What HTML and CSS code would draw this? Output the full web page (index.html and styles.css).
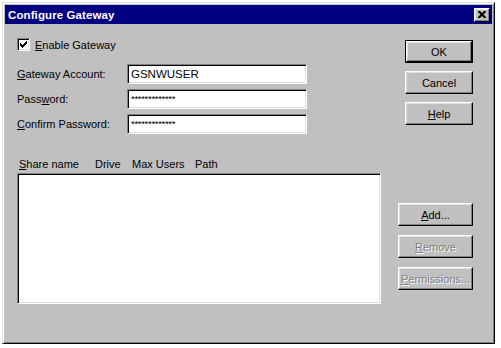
FILE: index.html
```html
<!DOCTYPE html>
<html>
<head>
<meta charset="utf-8">
<link rel="stylesheet" href="styles.css">
</head>
<body>
<div class="window">
  <div class="titlebar">
    <span class="title">Configure Gateway</span>
    <span class="close"><svg width="8" height="7" viewBox="0 0 8 7"><path d="M0 0h2l2 2 2-2h2v1l-2.5 2.5L8 6v1H6L4 5 2 7H0V6l2.5-2.5L0 1z" fill="#000"/></svg></span>
  </div>
  <div class="content">
    <div class="left">
      <div class="checkrow">
        <span class="checkbox"><svg width="7" height="7" viewBox="0 0 7 7"><path d="M0 2h1v1h1v1h1V3h1V2h1V1h1V0h1v3H6v1H5v1H4v1H3v1H2V6H1V5H0z" fill="#000"/></svg></span>
        <span class="label"><u>E</u>nable Gateway</span>
      </div>
      <div class="form">
        <div class="row"><span class="flabel"><u>G</u>ateway Account:</span><span class="field">GSNWUSER</span></div>
        <div class="row"><span class="flabel">Pass<u>w</u>ord:</span><span class="field pw">*************</span></div>
        <div class="row"><span class="flabel"><u>C</u>onfirm Password:</span><span class="field pw">*************</span></div>
      </div>
      <div class="listhead">
        <span class="c1"><u>S</u>hare name</span>
        <span class="c2">Drive</span>
        <span class="c3">Max Users</span>
        <span class="c4">Path</span>
      </div>
      <div class="listbox"></div>
    </div>
    <div class="right">
      <div class="btn default"><span class="inner">OK</span></div>
      <div class="btn small">Cancel</div>
      <div class="btn small"><span><u>H</u>elp</span></div>
      <div class="btn wide add"><span><u>A</u>dd...</span></div>
      <div class="btn wide disabled"><span><u>R</u>emove</span></div>
      <div class="btn wide disabled"><span><u>P</u>ermissions...</span></div>
    </div>
  </div>
</div>
</body>
</html>
```

FILE: styles.css
```css
html, body {
  margin: 0;
  padding: 0;
  background: #ffffff;
}
body {
  font-family: "Liberation Sans", Arial, sans-serif;
  font-size: 11px;
  color: #000;
}
.window {
  box-sizing: border-box;
  margin: 2px 0 0 2px;
  width: 493px;
  height: 342px;
  background: #c0c0c0;
  border: 1px solid;
  border-color: #dfdfdf #000 #000 #dfdfdf;
  box-shadow: inset 1px 1px #fff, inset -1px -1px #808080;
  padding: 2px;
  display: flex;
  flex-direction: column;
}
.titlebar {
  height: 19px;
  background: #000080;
  color: #fff;
  display: flex;
  align-items: center;
  justify-content: space-between;
  padding: 0 2px 0 3px;
}
.title {
  font-weight: bold;
  font-size: 11.5px;
  letter-spacing: 0.1px;
}
.close {
  box-sizing: border-box;
  width: 16px;
  height: 14px;
  background: #c0c0c0;
  border: 1px solid;
  border-color: #fff #000 #000 #fff;
  box-shadow: inset -1px -1px #808080, inset 1px 1px #dfdfdf;
  display: flex;
  align-items: center;
  justify-content: center;
}
.content {
  flex: 1;
  display: flex;
  justify-content: space-between;
}
.left {
  margin-left: 12px;
  display: flex;
  flex-direction: column;
}
.checkrow {
  margin-top: 14px;
  height: 13px;
  display: flex;
  align-items: center;
}
.checkbox {
  box-sizing: border-box;
  width: 13px;
  height: 13px;
  background: #fff;
  border: 1px solid;
  border-color: #808080 #fff #fff #808080;
  box-shadow: inset 1px 1px #000, inset -1px -1px #dfdfdf;
  display: flex;
  align-items: center;
  justify-content: center;
}
.label {
  margin-left: 5px;
}
.form {
  margin-top: 13px;
  display: flex;
  flex-direction: column;
  gap: 5px;
}
.row {
  display: flex;
  align-items: center;
  height: 20px;
}
.flabel {
  width: 110px;
}
.field {
  box-sizing: border-box;
  width: 180px;
  height: 20px;
  background: #fff;
  border: 1px solid;
  border-color: #808080 #fff #fff #808080;
  box-shadow: inset 1px 1px #000, inset -1px -1px #dfdfdf;
  padding: 0 0 0 3px;
  display: flex;
  align-items: center;
  font-size: 11.5px;
}
.field.pw {
  font-size: 9.5px;
  letter-spacing: -0.3px;
  align-items: flex-start;
  padding-top: 3px;
}
.listhead {
  margin-top: 23px;
  height: 14px;
  display: flex;
  align-items: center;
}
.listhead span { display: block; }
.c1 { margin-left: 2px; width: 76px; }
.c2 { width: 37px; }
.c3 { width: 63px; }
.listbox {
  box-sizing: border-box;
  margin-top: 2px;
  width: 364px;
  height: 131px;
  background: #fff;
  border: 1px solid;
  border-color: #808080 #fff #fff #808080;
  box-shadow: inset 1px 1px #000, inset -1px -1px #dfdfdf;
}
.right {
  margin-right: 19px;
  width: 75px;
  display: flex;
  flex-direction: column;
  align-items: flex-end;
}
.btn {
  box-sizing: border-box;
  height: 23px;
  display: flex;
  align-items: center;
  justify-content: center;
  background: #c0c0c0;
  border: 1px solid;
  border-color: #fff #000 #000 #fff;
  box-shadow: inset -1px -1px #808080, inset 1px 1px #dfdfdf;
}
.btn.small { width: 68px; margin-top: 8px; }
.btn.default {
  width: 68px;
  margin-top: 16px;
  border: 1px solid #000;
  box-shadow: none;
  padding: 0;
}
.btn.default .inner {
  box-sizing: border-box;
  width: 100%;
  height: 100%;
  display: flex;
  align-items: center;
  justify-content: center;
  border: 1px solid;
  border-color: #fff #000 #000 #fff;
  box-shadow: inset -1px -1px #808080, inset 1px 1px #dfdfdf;
}
.btn.wide { width: 75px; margin-top: 9px; }
.btn.add { margin-top: 78px; }
.btn.disabled span {
  color: #808080;
  text-shadow: 1px 1px 0 #fff;
}
```
